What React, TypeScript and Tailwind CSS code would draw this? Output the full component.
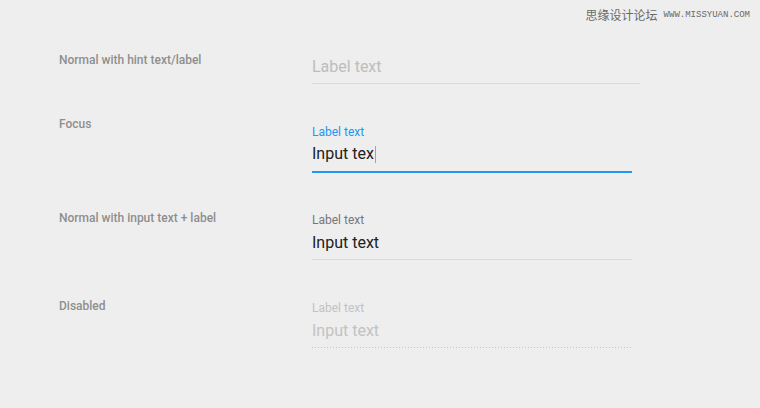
export default function App() {
  return (
    <div className="relative w-[760px] h-[408px] bg-[#eeeeee] font-['Roboto',sans-serif] overflow-hidden">
      {/* watermark */}
      <div className="absolute right-[10px] top-[8px] flex items-center gap-[6px] text-[#6a6a6a]">
        <span className="text-[12px] leading-[14px] font-['Noto_Sans_CJK_SC',sans-serif]">思缘设计论坛</span>
        <span className="text-[9px] leading-[14px] font-['Liberation_Mono',monospace]">WWW.MISSYUAN.COM</span>
      </div>

      <div className="pt-[52px] pl-[59px]">
        {/* Row 1 */}
        <div className="flex items-start">
          <p className="w-[253px] text-[12px] leading-4 font-medium text-[#8e8e8e]">Normal with hint text/label</p>
          <div className="mt-[3px] w-[328px] border-b border-[#dadada] pb-1">
            <div className="text-[16px] leading-6 text-[#bdbdbd]">Label text</div>
          </div>
        </div>

        {/* Row 2 */}
        <div className="mt-[32px] flex items-start">
          <p className="w-[253px] text-[12px] leading-4 font-medium text-[#8e8e8e]">Focus</p>
          <div className="mt-[8px] w-[320px] border-b-2 border-[#2196f3] pb-[5px]">
            <div className="text-[12px] leading-4 text-[#2196f3]">Label text</div>
            <div className="mt-[2px] flex items-center text-[16px] leading-6 text-[#212121]">
              Input tex
              <span className="ml-[1px] inline-block h-[17px] w-px bg-[#64b5f6]" />
            </div>
          </div>
        </div>

        {/* Row 3 */}
        <div className="mt-[37px] flex items-start">
          <p className="w-[253px] text-[12px] leading-4 font-medium text-[#8e8e8e]">Normal with input text + label</p>
          <div className="mt-[2px] w-[320px] border-b border-[#dadada] pb-1">
            <div className="text-[12px] leading-4 text-[#777777]">Label text</div>
            <div className="mt-[3px] text-[16px] leading-6 text-[#212121]">Input text</div>
          </div>
        </div>

        {/* Row 4 */}
        <div className="mt-[38px] flex items-start">
          <p className="w-[253px] text-[12px] leading-4 font-medium text-[#8e8e8e]">Disabled</p>
          <div className="mt-[2px] w-[320px]">
            <div className="text-[12px] leading-4 text-[#c2c2c2]">Label text</div>
            <div className="mt-[3px] pb-1 text-[16px] leading-6 text-[#c2c2c2]">Input text</div>
            <div className="h-px w-[320px] bg-[linear-gradient(to_right,#c4c4c4_1px,transparent_1px)] bg-[length:3px_1px]" />
          </div>
        </div>
      </div>
    </div>
  );
}
